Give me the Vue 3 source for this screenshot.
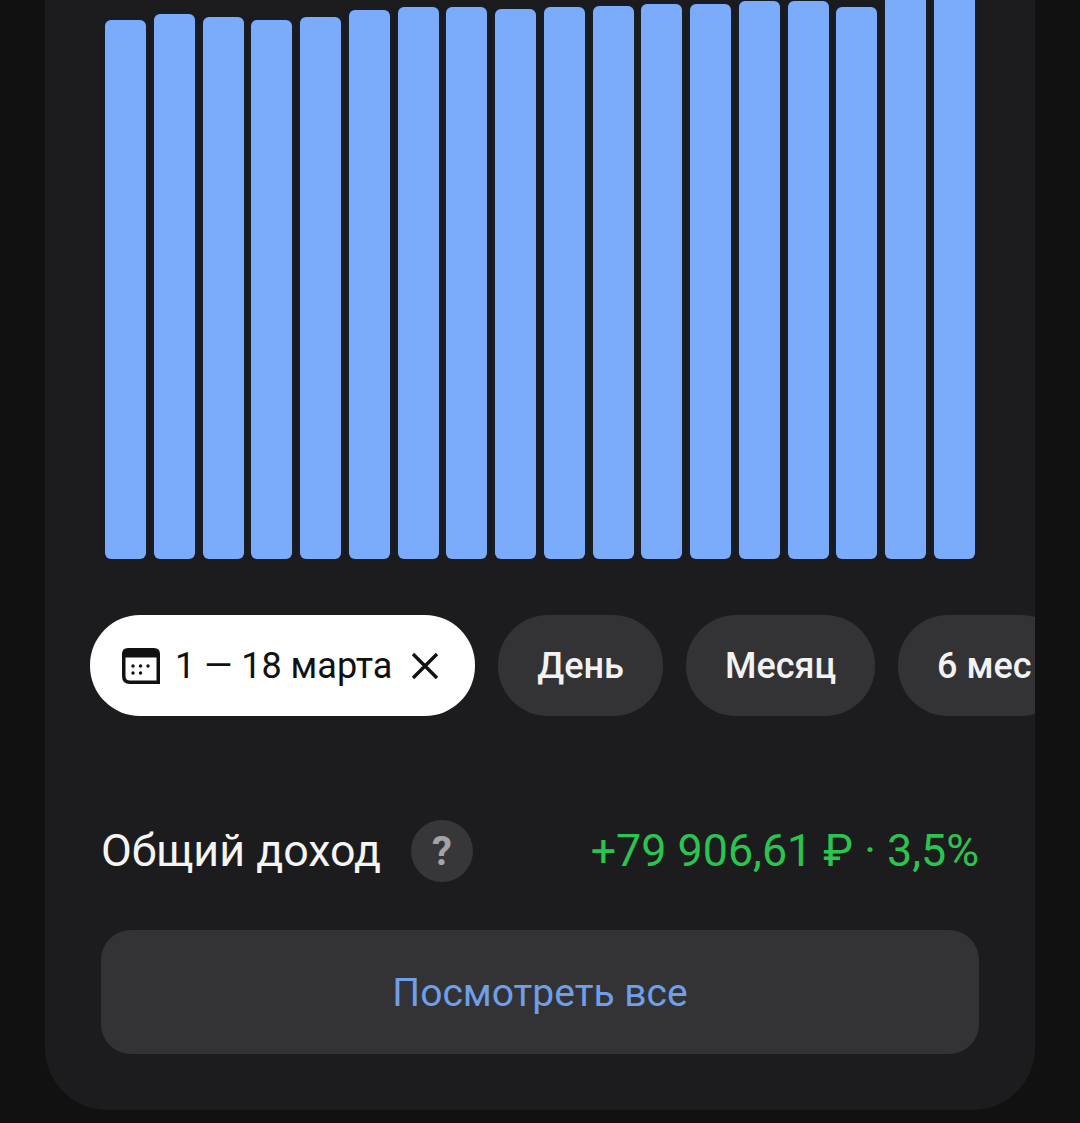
<script setup>
// top edge of each bar in the screenshot, the chart is cut off at y = 0
const tops = [20, 14, 17, 20, 17, 10, 7, 7, 9, 7, 6, 4, 4, 1, 1, 7, -20, -20]
const chartHeight = 559
const bars = tops.map((top) => chartHeight - top)

const periods = ['День', 'Месяц', '6 мес']
</script>

<template>
  <div class="page">
    <section class="card">
      <div class="chart">
        <div
          v-for="(height, i) in bars"
          :key="i"
          class="bar"
          :style="{ height: height + 'px' }"
        ></div>
      </div>

      <div class="chips">
        <button class="chip chip-active">
          <svg class="calendar" width="38" height="36" viewBox="0 0 38 36">
            <path
              d="M6 0H32Q38 0 38 6V36H8Q0 36 0 28V6Q0 0 6 0Z"
              fill="#111"
            />
            <path d="M3.5 9.5H34.5V32.5H8Q3.5 32.5 3.5 28Z" fill="#fff" />
            <g fill="#111">
              <circle cx="11" cy="18" r="1.7" />
              <circle cx="18.5" cy="18" r="1.7" />
              <circle cx="26" cy="18" r="1.7" />
              <circle cx="11" cy="25" r="1.7" />
              <circle cx="18.5" cy="25" r="1.7" />
            </g>
          </svg>
          <span>1 — 18 марта</span>
          <svg class="close" width="28" height="28" viewBox="0 0 28 28">
            <path
              d="M2 2L26 26M26 2L2 26"
              stroke="#111"
              stroke-width="3.4"
              fill="none"
            />
          </svg>
        </button>
        <button v-for="period in periods" :key="period" class="chip">
          {{ period }}
        </button>
      </div>

      <div class="income">
        <span class="income-label">Общий доход</span>
        <span class="help">?</span>
        <span class="income-value">+79 906,61 ₽ · 3,5%</span>
      </div>

      <button class="view-all">Посмотреть все</button>
    </section>
  </div>
</template>

<style>
html,
body {
  background: #111112;
}
</style>

<style scoped>
.page {
  height: 1123px;
  padding: 0 45px;
  box-sizing: border-box;
  background: #111112;
  overflow: hidden;
  font-family: Roboto, "Noto Sans", sans-serif;
}

.card {
  height: 1110px;
  background: #1c1c1e;
  border-radius: 0 0 62px 62px;
  overflow: hidden;
}

.chart {
  height: 559px;
  padding: 0 60px;
  display: flex;
  align-items: flex-end;
  justify-content: space-between;
  overflow: hidden;
}

.bar {
  width: 41px;
  flex: none;
  background: #7bacfb;
  border-radius: 6px;
  box-shadow: 0 0 4px #10203e;
}

.chips {
  margin-top: 56px;
  padding-left: 45px;
  display: flex;
  gap: 23px;
  overflow: hidden;
}

.chip {
  flex: none;
  height: 101px;
  padding: 0 39px;
  border: 0;
  border-radius: 50px;
  background: #333336;
  color: #f2f2f3;
  font: 500 36px Roboto, sans-serif;
}

.chip-active {
  padding: 0 36px 0 32px;
  display: flex;
  align-items: center;
  background: #fff;
  color: #111;
  font-weight: 400;
}

.calendar {
  margin-right: 15px;
}

.close {
  margin-left: 19px;
}

.income {
  margin-top: 104px;
  padding: 0 56px;
  height: 62px;
  display: flex;
  align-items: center;
}

.income-label {
  color: #f5f5f5;
  font-size: 44.8px;
  line-height: 60px;
}

.help {
  width: 62px;
  height: 62px;
  margin-left: 30px;
  border-radius: 50%;
  background: #37373a;
  color: #a3a3a8;
  font-size: 40px;
  font-weight: 700;
  display: flex;
  align-items: center;
  justify-content: center;
}

.income-value {
  margin-left: auto;
  color: #2cc450;
  font-size: 44.8px;
  line-height: 60px;
}

.view-all {
  display: block;
  width: 878px;
  height: 124px;
  margin: 48px 0 0 56px;
  padding: 2px 0 0;
  border: 0;
  border-radius: 30px;
  background: #333336;
  color: #6f9fe8;
  font: 400 39px Roboto, sans-serif;
}
</style>
